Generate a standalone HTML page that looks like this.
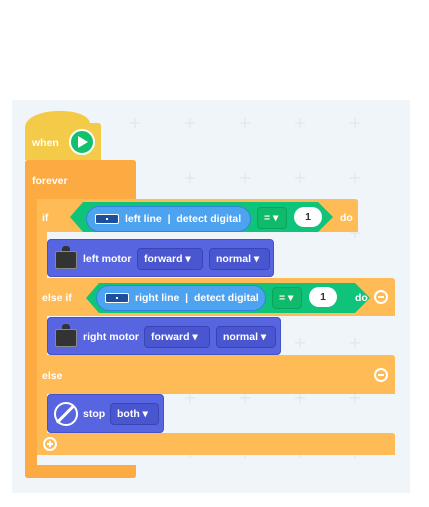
<!DOCTYPE html><html><head><style>
body{margin:0;width:429px;height:507px;background:#fff;position:relative;overflow:hidden;font-family:"Liberation Sans",sans-serif;font-weight:bold;color:#fff}
div{position:absolute;box-sizing:border-box}
.t{font-size:10.5px;white-space:nowrap;line-height:12px}
.dd{background:#4a56d0;border:1px solid #3a45b5;border-radius:4px;font-size:10.5px;line-height:20px;padding:0 6px;white-space:nowrap}
.gd{background:#0fba6a;border:1px solid #0aa55c;border-radius:4px;font-size:10.5px;line-height:20px;padding:0 6px}
.one{background:#fff;color:#333;border-radius:12px;text-align:center;font-size:10.5px;line-height:20px}
.pill{background:#4da3f0;border:1px solid #2f86d8;border-radius:13px;font-size:10.5px;line-height:24px;padding-left:38px;white-space:nowrap}
.sens{left:8px;top:7px;width:24px;height:10px;background:#1d4f9c;border:1px solid #fff;border-radius:2px}
.sens:after{content:"";position:absolute;left:10px;top:3px;width:2px;height:2px;background:#fff}
.mot{background:#5865e0;border-radius:4px;border:1px solid #4652c8}
.circ{width:14px;height:14px;border:2px solid #fff;border-radius:50%}
</style></head><body>
<div style="left:12px;top:100px;width:398px;height:393px;background:#f0f5fa"></div>
<svg style="position:absolute;left:0;top:0" width="429" height="507">
<g stroke="#dde4ee" stroke-width="1">
<path d="M80 118v10M75 123h10M135 118v10M130 123h10M190 118v10M185 123h10M245 118v10M240 123h10M300 118v10M295 123h10M355 118v10M350 123h10
M190 173v10M185 178h10M245 173v10M240 178h10M300 173v10M295 178h10M355 173v10M350 178h10
M355 228v10M350 233h10M355 338v10M350 343h10M300 338v10M295 343h10
M190 393v10M185 398h10M245 393v10M240 398h10M300 393v10M295 398h10M355 393v10M350 398h10
M190 448v10M185 453h10M245 448v10M240 453h10M300 448v10M295 453h10M355 448v10M350 453h10"/></g>
<path d="M25 128 C25 106 88 106 90 123 L98 123 Q101 123 101 126 L101 160 L25 160Z" fill="#f4cb48"/>
<path d="M25 163 Q25 160 28 160 L133 160 Q136 160 136 163 L136 199 L37 199 L37 465 L136 465 L136 475 Q136 478 133 478 L28 478 Q25 478 25 475Z" fill="#fcaa42"/>
<path d="M37 199 L355 199 Q358 199 358 202 L358 232 L47 232 L47 278 L392 278 Q395 278 395 281 L395 316 L47 316 L47 355 L392 355 Q395 355 395 358 L395 394 L47 394 L47 433 L392 433 Q395 433 395 436 L395 455 L37 455Z" fill="#ffbb55"/>
<path d="M83 202 L318 202 L333 217 L318 232 L83 232 L70 217Z" fill="#0fc47a"/>
<path d="M99 283 L355 283 L370 298 L355 313 L99 313 L86 298Z" fill="#0fc47a"/>
<circle cx="82" cy="142" r="12" fill="#12c06e" stroke="#fff" stroke-width="2"/>
<path d="M78 136 L88 142 L78 148Z" fill="#fff"/>
</svg>
<div class="t" style="left:32px;top:137px">when</div>
<div class="t" style="left:32px;top:175px">forever</div>
<div class="t" style="left:42px;top:212px">if</div>
<div class="t" style="left:42px;top:292px">else if</div>
<div class="t" style="left:42px;top:370px">else</div>
<div class="t" style="left:340px;top:212px">do</div>
<div class="t" style="left:355px;top:292px">do</div>
<div class="circ" style="left:374px;top:290px"><div style="left:2px;top:4px;width:6px;height:2px;background:#fff"></div></div>
<div class="circ" style="left:374px;top:368px"><div style="left:2px;top:4px;width:6px;height:2px;background:#fff"></div></div>
<div class="circ" style="left:43px;top:437px"><div style="left:2px;top:4px;width:6px;height:2px;background:#fff"></div><div style="left:4px;top:2px;width:2px;height:6px;background:#fff"></div></div>

<div class="pill" style="left:86px;top:206px;width:165px;height:26px">left line &nbsp;| &nbsp;detect digital<div class="sens"></div></div>
<div class="gd" style="left:257px;top:207px;width:30px;height:22px">= ▾</div>
<div class="one" style="left:294px;top:207px;width:28px">1</div>
<div class="pill" style="left:96px;top:285px;width:170px;height:26px">right line &nbsp;| &nbsp;detect digital<div class="sens"></div></div>
<div class="gd" style="left:272px;top:287px;width:30px;height:22px">= ▾</div>
<div class="one" style="left:309px;top:287px;width:28px">1</div>

<div class="mot" style="left:47px;top:239px;width:227px;height:38px"></div>
<div style="left:55px;top:251px;width:22px;height:18px;background:#333;border:1px solid #888;border-radius:2px"></div>
<div style="left:62px;top:246px;width:8px;height:5px;background:#333;border-radius:3px 3px 0 0"></div>
<div class="t" style="left:83px;top:253px">left motor</div>
<div class="dd" style="left:137px;top:248px;width:66px;height:22px">forward ▾</div>
<div class="dd" style="left:209px;top:248px;width:61px;height:22px">normal ▾</div>

<div class="mot" style="left:47px;top:317px;width:234px;height:38px"></div>
<div style="left:55px;top:329px;width:22px;height:18px;background:#333;border:1px solid #888;border-radius:2px"></div>
<div style="left:62px;top:324px;width:8px;height:5px;background:#333;border-radius:3px 3px 0 0"></div>
<div class="t" style="left:83px;top:331px">right motor</div>
<div class="dd" style="left:144px;top:326px;width:66px;height:22px">forward ▾</div>
<div class="dd" style="left:216px;top:326px;width:60px;height:22px">normal ▾</div>

<div class="mot" style="left:47px;top:394px;width:117px;height:39px"></div>
<div style="left:54px;top:402px;width:24px;height:24px;border:2.5px solid #fff;border-radius:50%"><div style="left:8px;top:-2px;width:2.5px;height:24px;background:#fff;transform:rotate(45deg)"></div></div>
<div class="t" style="left:83px;top:408px">stop</div>
<div class="dd" style="left:110px;top:403px;width:49px;height:22px">both ▾</div>
</body></html>
